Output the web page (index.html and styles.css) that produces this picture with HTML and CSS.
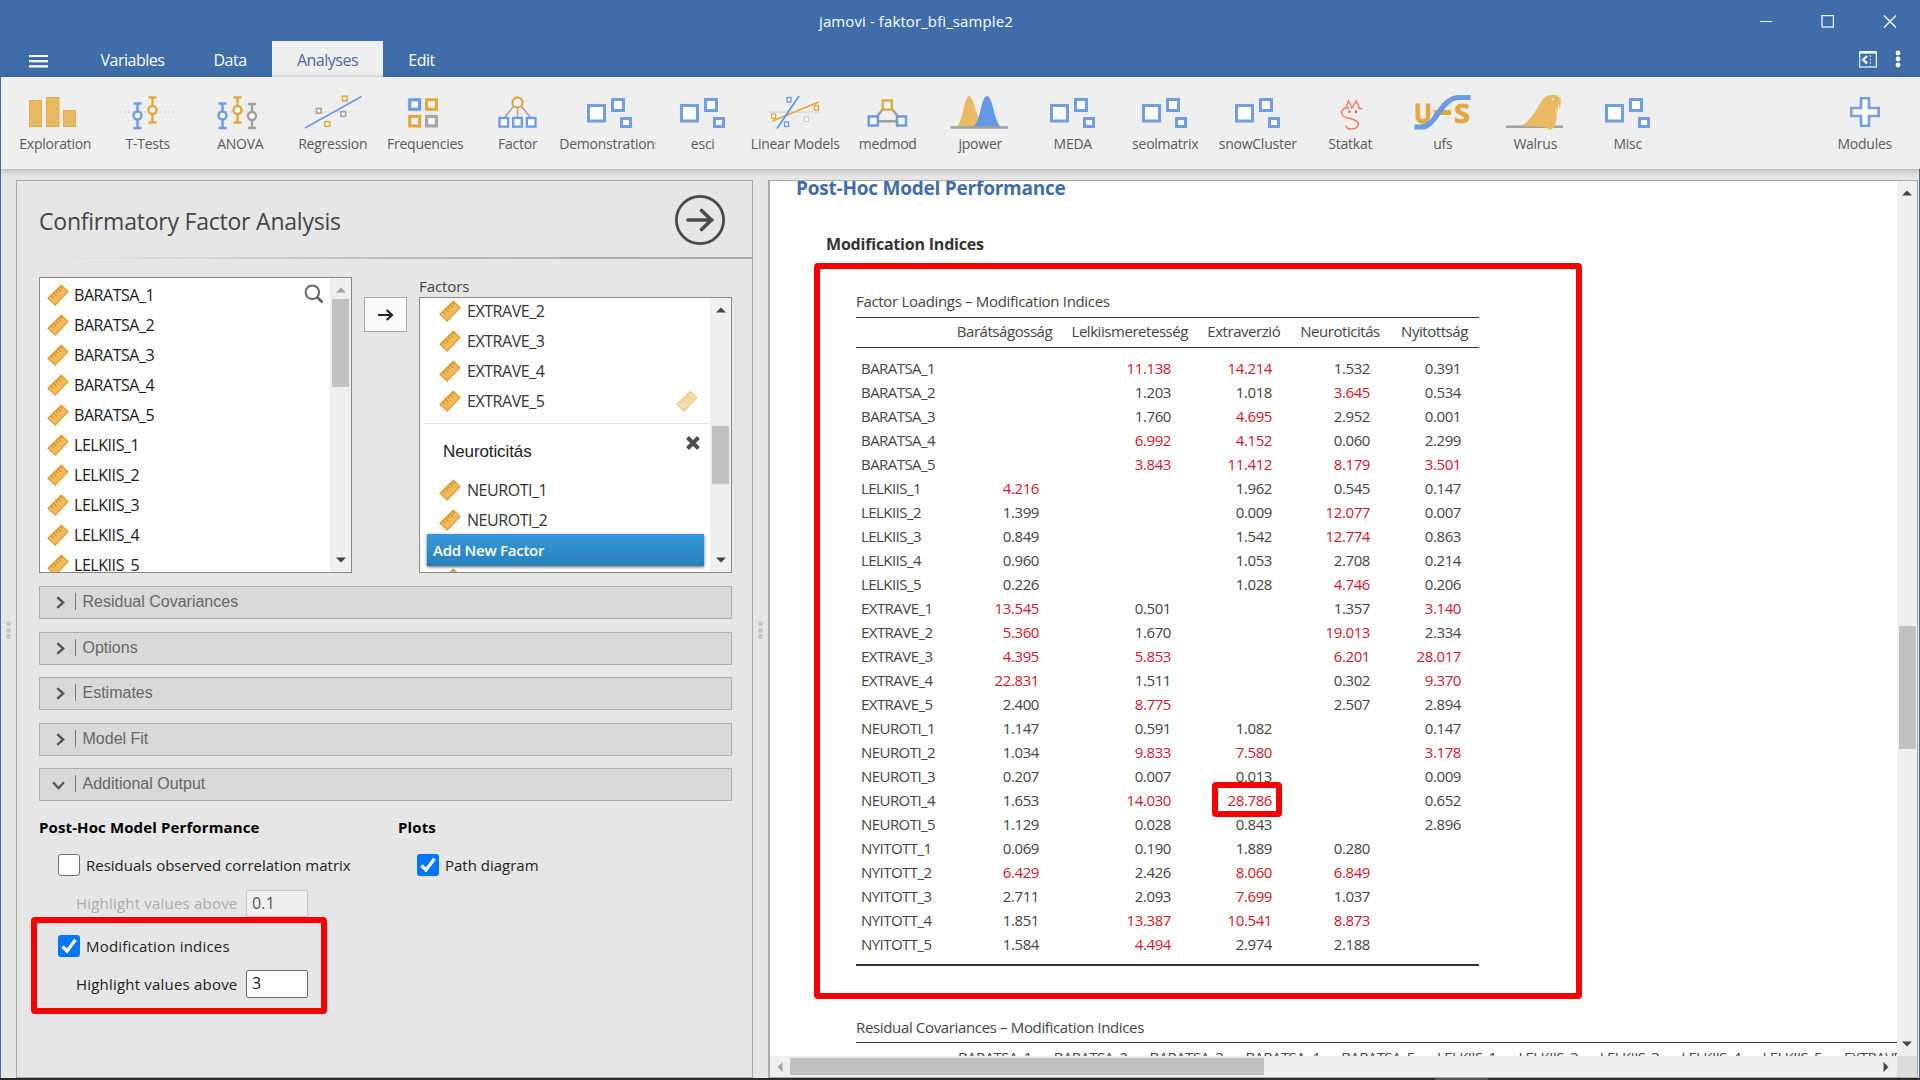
FILE: index.html
```html
<!DOCTYPE html>
<html lang="en">
<head>
<meta charset="utf-8">
<title>jamovi - faktor_bfi_sample2</title>
<link rel="stylesheet" href="styles.css">
</head>
<body>
<svg class="defs" aria-hidden="true">
  <symbol id="ruler" viewBox="0 0 22 22">
    <path d="M1 14.2 14.4 1.2 21 7.6 8.2 21Z" fill="#f2b95a" stroke="#dd9f35" stroke-width="1.3" stroke-linejoin="round"/>
    <path d="M4 11.6l2 2M6.4 9.2l3 3M8.8 6.8l2 2M11.2 4.6l3 3M13.4 2.6l2 2" stroke="#c98a22" stroke-width="1.1" fill="none"/>
  </symbol>
  <symbol id="squares" viewBox="0 0 60 36">
    <g fill="#fff" stroke="#739de3" stroke-width="3">
      <rect x="8.5" y="11.500" width="16" height="15.500"/>
      <rect x="32.500" y="5.500" width="11" height="11"/>
      <rect x="41.500" y="24.500" width="9" height="8"/>
    </g>
  </symbol>
  <symbol id="up" viewBox="0 0 10 6"><path d="M0 5.5 5 0.5 10 5.5Z" fill="currentColor"/></symbol>
  <symbol id="down" viewBox="0 0 10 6"><path d="M0 .5 5 5.5 10 .5Z" fill="currentColor"/></symbol>
  <symbol id="chev" viewBox="0 0 12 12"><path d="M3 1 8.5 6 3 11" fill="none" stroke="#555" stroke-width="2.2"/></symbol>
  <symbol id="arrow" viewBox="0 0 16 12"><path d="M0 6H14M8.7 1 14 6 8.7 11" fill="none" stroke="currentColor" stroke-width="2.2"/></symbol>
  <symbol id="check" viewBox="0 0 22 22"><path d="M4.5 11.5 9 16 17.5 4.8" fill="none" stroke="#fff" stroke-width="3.2"/></symbol>
</svg>

<div class="app">
  <header class="titlebar">
    <div class="window-row">
      <span class="window-title">jamovi - faktor_bfi_sample2</span>
      <svg class="window-controls" width="138" height="14" viewBox="0 0 138 14" fill="none" stroke="#fff" stroke-width="1.2">
        <path d="M1 7.5H13M125 1.5 137 13.5M137 1.5 125 13.5"/><rect x="63" y="1.6" width="11.4" height="11.4"/>
      </svg>
    </div>
    <nav class="tab-row">
      <svg class="burger" width="19" height="14" viewBox="0 0 19 14" stroke="#fff" stroke-width="2.2"><path d="M0 2H19M0 7.2H19M0 12.4H19"/></svg>
      <span class="tab tab-variables">Variables</span>
      <span class="tab tab-data">Data</span>
      <span class="tab tab-active">Analyses</span>
      <span class="tab tab-edit">Edit</span>
      <svg class="view-toggle" width="18" height="17" viewBox="0 0 18 17" fill="none" stroke="#dfe9f6"><rect x=".7" y="1" width="16.6" height="15" stroke-width="1.3"/><path d="M0 1.4H18" stroke="#fff" stroke-width="2.4"/><path d="M8 5 4 8.7 8 12.4" stroke="#fff" stroke-width="2.2"/><path d="M11.3 4V16" stroke-dasharray="2 1.5"/></svg>
      <svg class="more" width="6" height="18" viewBox="0 0 6 18" fill="#fff"><circle cx="3" cy="3" r="2.4"/><circle cx="3" cy="9" r="2.4"/><circle cx="3" cy="15" r="2.4"/></svg>
    </nav>
  </header>

  <div class="ribbon">
    <div class="module"><svg class="module-icon" viewBox="0 0 60 36"><g fill="#eaba62" stroke="#dfae50"><rect x="4.5" y="6.5" width="12" height="26"/><rect x="21.5" y="3.5" width="12.5" height="29"/><rect x="38.5" y="16.5" width="12" height="16"/></g></svg><span class="module-name">Exploration</span></div>
    <div class="module"><svg class="module-icon" viewBox="0 0 60 36"><path d="M2 18H58" stroke="#bbb" stroke-dasharray="1.5 2.5"/><g fill="#fff" stroke-width="2.4"><path stroke="#6c9be6" d="M19.5 9V34M15.5 9.5H23.5M15.5 34H23.5"/><circle stroke="#6c9be6" cx="19.5" cy="21.5" r="4"/><path stroke="#e3a83c" d="M34.5 3V29M30.5 3.5H38.5M30.5 28.5H38.5"/><circle stroke="#e3a83c" cx="34.5" cy="16" r="4"/></g></svg><span class="module-name">T-Tests</span></div>
    <div class="module"><svg class="module-icon" viewBox="0 0 60 36"><path d="M0 18H58" stroke="#bbb" stroke-dasharray="1.5 2.5"/><g fill="#fff" stroke-width="2.4"><path stroke="#6c9be6" d="M12.5 9V34M8.5 9.5H16.5M8.5 34H16.5"/><circle stroke="#6c9be6" cx="12.5" cy="21.5" r="4"/><path stroke="#e3a83c" d="M27.5 3V29M23.5 3.5H31.5M23.5 28.5H31.5"/><circle stroke="#e3a83c" cx="27.5" cy="16" r="4"/><path stroke="#a0a0a0" d="M42 9V34M38 10H46M38 34H46"/><circle stroke="#a0a0a0" cx="42" cy="22" r="4"/></g></svg><span class="module-name">ANOVA</span></div>
    <div class="module"><svg class="module-icon" viewBox="0 0 60 36"><path d="M2 18H59" stroke="#bbb" stroke-dasharray="1.5 2.5"/><path d="M2 34 58.5 2.5" stroke="#6c9be6" stroke-width="2"/><g fill="#fff" stroke-width="1.6"><rect x="39.5" y="2.2" width="4.6" height="4.6" stroke="#e3a83c"/><rect x="13.5" y="14.5" width="4.6" height="4.6" stroke="#a0a0a0"/><rect x="38" y="17.7" width="4.6" height="4.6" stroke="#a0a0a0"/><rect x="22" y="27.7" width="4.6" height="4.6" stroke="#e3a83c"/></g></svg><span class="module-name">Regression</span></div>
    <div class="module"><svg class="module-icon" viewBox="0 0 60 36"><g fill="#fff" stroke-width="3.2"><rect x="14.8" y="5.8" width="9.8" height="9.4" stroke="#6c9be6"/><rect x="31.6" y="5.8" width="9.8" height="9.4" stroke="#e3a83c"/><rect x="14.8" y="22.5" width="9.8" height="9.4" stroke="#e3a83c"/><rect x="31.6" y="22.5" width="9.8" height="9.4" stroke="#a8a8a8"/></g></svg><span class="module-name">Frequencies</span></div>
    <div class="module"><svg class="module-icon" viewBox="0 0 60 36"><path d="M26 12 16 24M29.5 14V24M33 12 43 24" stroke="#a0a0a0" stroke-width="1.5"/><g fill="#fff" stroke="#6c9be6" stroke-width="2.3"><circle cx="29.5" cy="8.5" r="5" stroke="#e3a83c"/><rect x="11.5" y="24" width="8.6" height="8.6"/><rect x="25.2" y="24" width="8.6" height="8.6"/><rect x="38.9" y="24" width="8.6" height="8.6"/></g></svg><span class="module-name">Factor</span></div>
    <div class="module"><svg class="module-icon"><use href="#squares"/></svg><span class="module-name module-name-clipped">Demonstrations</span></div>
    <div class="module"><svg class="module-icon"><use href="#squares"/></svg><span class="module-name">esci</span></div>
    <div class="module"><svg class="module-icon" viewBox="0 0 60 36"><path d="M4 18H54" stroke="#d8d8d8" stroke-width="1.6"/><path d="M7.5 27 54 8" stroke="#e3a83c" stroke-width="1.7"/><path d="M12 34.5 34 2" stroke="#5b94e8" stroke-width="1.7"/><g fill="#fff" stroke-width="1.3"><rect x="22" y="3.5" width="4" height="4.5" stroke="#5b94e8"/><rect x="49.5" y="11.5" width="4" height="4.500" stroke="#e3a83c"/><rect x="6.5" y="20" width="4" height="4.5" stroke="#e3a83c"/><rect x="19.5" y="28" width="4" height="4.5" stroke="#5b94e8"/><rect x="39.5" y="23" width="4" height="4.5" stroke="#ccc"/></g></svg><span class="module-name">Linear Models</span></div>
    <div class="module"><svg class="module-icon" viewBox="0 0 60 36"><path d="M25 15 17 25M34 15 42 25M20 27.3H40" stroke="#a0a0a0" stroke-width="2.5"/><g fill="#fff" stroke="#6c9be6" stroke-width="2.5"><rect x="24.8" y="6.5" width="9" height="9" stroke="#e3a83c"/><rect x="10.8" y="22.5" width="9" height="9"/><rect x="39" y="22.5" width="9" height="9"/></g></svg><span class="module-name">medmod</span></div>
    <div class="module"><svg class="module-icon" viewBox="0 0 60 36"><path d="M6 33C13 30 14 2 19 2S27 28 34 33Z" fill="#eaba62"/><path d="M22.500 33C30.500 30 31 2 37 2S44.500 30 51.500 33Z" fill="#6598e6"/><path d="M.5 33.5H58" stroke="#a0a0a0" stroke-width="2.6"/></svg><span class="module-name">jpower</span></div>
    <div class="module"><svg class="module-icon"><use href="#squares"/></svg><span class="module-name">MEDA</span></div>
    <div class="module"><svg class="module-icon"><use href="#squares"/></svg><span class="module-name">seolmatrix</span></div>
    <div class="module"><svg class="module-icon"><use href="#squares"/></svg><span class="module-name">snowCluster</span></div>
    <div class="module"><svg class="module-icon" viewBox="0 0 60 36"><g fill="none" stroke="#f08060" stroke-width="1.5"><path d="M25.5 15 28.5 7 31.8 14 36.3 7 39.5 14.8 42.5 14.2"/><path d="M29.5 14.2C22 13 18 20 25.5 23.2 30 25 37 25 38.5 29.5 38.5 36 27 37 25.5 31.5"/></g><circle cx="29.4" cy="17.7" r="1.2" fill="#e04848"/><circle cx="36" cy="17.7" r="1.2" fill="#e04848"/></svg><span class="module-name">Statkat</span></div>
    <div class="module"><svg class="module-icon" viewBox="0 0 60 36"><text class="ufs-letter" x="1" y="28.500" textLength="18" lengthAdjust="spacingAndGlyphs">U</text><path d="M21 18.5H38" stroke="#e3a83c" stroke-width="5"/><text class="ufs-letter" x="41" y="28.500" textLength="16" lengthAdjust="spacingAndGlyphs">S</text><path d="M1.500 33H8C24 33 27 3.500 46 3.500H57.500" fill="none" stroke="#6c9be6" stroke-width="5.2"/></svg><span class="module-name">ufs</span></div>
    <div class="module"><svg class="module-icon" viewBox="0 0 60 36"><path d="M1 32.7H58" stroke="#a0a0a0" stroke-width="2.5"/><path d="M15 32C30 26 35 4 42 2 49 -.5 55 1 56 7L55 15 53 9 52.5 20 50.5 11C51 20 53 25 50 31 49 36 43 37 41 33Z" fill="#eaba62"/><circle cx="48" cy="5.500" r="1" fill="#fff"/></svg><span class="module-name">Walrus</span></div>
    <div class="module"><svg class="module-icon"><use href="#squares"/></svg><span class="module-name">Misc</span></div>
    <div class="module module-add"><svg class="module-icon" viewBox="0 0 60 36"><path d="M26 4.300H34V14H43.700V22H34V31.700H26V22H16.300V14H26Z" fill="#fff" stroke="#739de3" stroke-width="2.6"/></svg><span class="module-name">Modules</span></div>
  </div>

  <main class="workspace">
    <div class="grip"><i></i><i></i><i></i></div>
    <section class="options">
      <div class="options-head">
        <h1>Confirmatory Factor Analysis</h1>
        <svg class="go" width="50" height="50" viewBox="0 0 50 50" fill="none" stroke="#4a4a4a"><circle cx="25" cy="25" r="23.6" stroke-width="2.8"/><path d="M13 25H37M26.5 15.5 36.5 25 26.5 34.5" stroke-width="3.6" stroke-linecap="round" stroke-linejoin="round"/></svg>
      </div>
      <div class="rule"></div>
      <div class="options-body">
        <div class="pickers">
          <div class="listbox supplier">
            <div class="items">
              <div class="item"><svg><use href="#ruler"/></svg>BARATSA_1</div>
              <div class="item"><svg><use href="#ruler"/></svg>BARATSA_2</div>
              <div class="item"><svg><use href="#ruler"/></svg>BARATSA_3</div>
              <div class="item"><svg><use href="#ruler"/></svg>BARATSA_4</div>
              <div class="item"><svg><use href="#ruler"/></svg>BARATSA_5</div>
              <div class="item"><svg><use href="#ruler"/></svg>LELKIIS_1</div>
              <div class="item"><svg><use href="#ruler"/></svg>LELKIIS_2</div>
              <div class="item"><svg><use href="#ruler"/></svg>LELKIIS_3</div>
              <div class="item"><svg><use href="#ruler"/></svg>LELKIIS_4</div>
              <div class="item"><svg><use href="#ruler"/></svg>LELKIIS_5</div>
            </div>
            <svg class="search" width="20" height="20" viewBox="0 0 20 20" fill="none" stroke="#666" stroke-width="2"><circle cx="8.3" cy="8.3" r="6.8"/><path d="M13 13 18.5 18.5" stroke-width="2.6"/></svg>
            <div class="vscroll"><svg class="tip faded"><use href="#up"/></svg><div class="thumb thumb-supplier"></div><svg class="tip tip-end"><use href="#down"/></svg></div>
          </div>
          <div class="move"><svg width="16" height="12"><use href="#arrow"/></svg></div>
          <div class="target">
            <div class="target-label">Factors</div>
            <div class="listbox factors">
              <div class="items">
                <div class="item"><svg><use href="#ruler"/></svg>EXTRAVE_2</div>
                <div class="item"><svg><use href="#ruler"/></svg>EXTRAVE_3</div>
                <div class="item"><svg><use href="#ruler"/></svg>EXTRAVE_4</div>
                <div class="item"><svg><use href="#ruler"/></svg>EXTRAVE_5<svg class="ghost"><use href="#ruler"/></svg></div>
                <div class="group-title"><span>Neuroticitás</span><svg width="14" height="14" viewBox="0 0 14 14" stroke="#4d4d4d" stroke-width="4"><path d="M1.5 1.5 12.5 12.5M12.5 1.5 1.5 12.5"/></svg></div>
                <div class="item"><svg><use href="#ruler"/></svg>NEUROTI_1</div>
                <div class="item"><svg><use href="#ruler"/></svg>NEUROTI_2</div>
                <div class="item item-under"><svg><use href="#ruler"/></svg></div>
              </div>
              <div class="add-factor">Add New Factor</div>
              <div class="vscroll"><svg class="tip"><use href="#up"/></svg><div class="thumb thumb-factors"></div><svg class="tip tip-end"><use href="#down"/></svg></div>
            </div>
          </div>
        </div>
        <div class="sections">
          <div class="section"><svg><use href="#chev"/></svg><span>Residual Covariances</span></div>
          <div class="section"><svg><use href="#chev"/></svg><span>Options</span></div>
          <div class="section"><svg><use href="#chev"/></svg><span>Estimates</span></div>
          <div class="section"><svg><use href="#chev"/></svg><span>Model Fit</span></div>
          <div class="section section-open"><svg><use href="#chev"/></svg><span>Additional Output</span></div>
        </div>
        <div class="extra">
          <div class="extra-col">
            <h2>Post-Hoc Model Performance</h2>
            <div class="check-row"><span class="box"></span>Residuals observed correlation matrix</div>
            <div class="value-row value-off"><span>Highlight values above</span><span class="field">0.1</span></div>
            <div class="check-row check-row-second"><span class="box box-on"><svg><use href="#check"/></svg></span>Modification indices</div>
            <div class="value-row"><span>Highlight values above</span><span class="field">3</span></div>
            <div class="mark mark-option"></div>
          </div>
          <div class="extra-col">
            <h2>Plots</h2>
            <div class="check-row"><span class="box box-on"><svg><use href="#check"/></svg></span>Path diagram</div>
          </div>
        </div>
      </div>
    </section>
    <div class="grip"><i></i><i></i><i></i></div>
    <section class="results">
      <div class="results-main">
        <div class="page">
          <h2 class="page-title">Post-Hoc Model Performance</h2>
          <h3 class="page-subtitle">Modification Indices</h3>
          <div class="table-block">
            <table class="loadings">
              <caption>Factor Loadings – Modification Indices</caption>
              <colgroup><col class="c0"><col class="c1"><col class="c2"><col class="c3"><col class="c4"><col class="c5"></colgroup>
              <thead><tr><th></th><th>Barátságosság</th><th>Lelkiismeretesség</th><th>Extraverzió</th><th>Neuroticitás</th><th>Nyitottság</th></tr></thead>
              <tbody>
                <tr><td>BARATSA_1</td><td></td><td class="hi">11.138</td><td class="hi">14.214</td><td>1.532</td><td>0.391</td></tr>
                <tr><td>BARATSA_2</td><td></td><td>1.203</td><td>1.018</td><td class="hi">3.645</td><td>0.534</td></tr>
                <tr><td>BARATSA_3</td><td></td><td>1.760</td><td class="hi">4.695</td><td>2.952</td><td>0.001</td></tr>
                <tr><td>BARATSA_4</td><td></td><td class="hi">6.992</td><td class="hi">4.152</td><td>0.060</td><td>2.299</td></tr>
                <tr><td>BARATSA_5</td><td></td><td class="hi">3.843</td><td class="hi">11.412</td><td class="hi">8.179</td><td class="hi">3.501</td></tr>
                <tr><td>LELKIIS_1</td><td class="hi">4.216</td><td></td><td>1.962</td><td>0.545</td><td>0.147</td></tr>
                <tr><td>LELKIIS_2</td><td>1.399</td><td></td><td>0.009</td><td class="hi">12.077</td><td>0.007</td></tr>
                <tr><td>LELKIIS_3</td><td>0.849</td><td></td><td>1.542</td><td class="hi">12.774</td><td>0.863</td></tr>
                <tr><td>LELKIIS_4</td><td>0.960</td><td></td><td>1.053</td><td>2.708</td><td>0.214</td></tr>
                <tr><td>LELKIIS_5</td><td>0.226</td><td></td><td>1.028</td><td class="hi">4.746</td><td>0.206</td></tr>
                <tr><td>EXTRAVE_1</td><td class="hi">13.545</td><td>0.501</td><td></td><td>1.357</td><td class="hi">3.140</td></tr>
                <tr><td>EXTRAVE_2</td><td class="hi">5.360</td><td>1.670</td><td></td><td class="hi">19.013</td><td>2.334</td></tr>
                <tr><td>EXTRAVE_3</td><td class="hi">4.395</td><td class="hi">5.853</td><td></td><td class="hi">6.201</td><td class="hi">28.017</td></tr>
                <tr><td>EXTRAVE_4</td><td class="hi">22.831</td><td>1.511</td><td></td><td>0.302</td><td class="hi">9.370</td></tr>
                <tr><td>EXTRAVE_5</td><td>2.400</td><td class="hi">8.775</td><td></td><td>2.507</td><td>2.894</td></tr>
                <tr><td>NEUROTI_1</td><td>1.147</td><td>0.591</td><td>1.082</td><td></td><td>0.147</td></tr>
                <tr><td>NEUROTI_2</td><td>1.034</td><td class="hi">9.833</td><td class="hi">7.580</td><td></td><td class="hi">3.178</td></tr>
                <tr><td>NEUROTI_3</td><td>0.207</td><td>0.007</td><td>0.013</td><td></td><td>0.009</td></tr>
                <tr><td>NEUROTI_4</td><td>1.653</td><td class="hi">14.030</td><td class="hi marked">28.786<div class="mark mark-cell"></div></td><td></td><td>0.652</td></tr>
                <tr><td>NEUROTI_5</td><td>1.129</td><td>0.028</td><td>0.843</td><td></td><td>2.896</td></tr>
                <tr><td>NYITOTT_1</td><td>0.069</td><td>0.190</td><td>1.889</td><td>0.280</td><td></td></tr>
                <tr><td>NYITOTT_2</td><td class="hi">6.429</td><td>2.426</td><td class="hi">8.060</td><td class="hi">6.849</td><td></td></tr>
                <tr><td>NYITOTT_3</td><td>2.711</td><td>2.093</td><td class="hi">7.699</td><td>1.037</td><td></td></tr>
                <tr><td>NYITOTT_4</td><td>1.851</td><td class="hi">13.387</td><td class="hi">10.541</td><td class="hi">8.873</td><td></td></tr>
                <tr><td>NYITOTT_5</td><td>1.584</td><td class="hi">4.494</td><td>2.974</td><td>2.188</td><td></td></tr>
              </tbody>
            </table>
            <div class="mark mark-table"></div>
          </div>
          <div class="residual">
            <div class="residual-title">Residual Covariances – Modification Indices</div>
            <div class="residual-head"><span>BARATSA_1</span><span>BARATSA_2</span><span>BARATSA_3</span><span>BARATSA_4</span><span>BARATSA_5</span><span class="narrow">LELKIIS_1</span><span class="narrow">LELKIIS_2</span><span class="narrow">LELKIIS_3</span><span class="narrow">LELKIIS_4</span><span class="narrow">LELKIIS_5</span><span>EXTRAVE_1</span></div>
          </div>
        </div>
        <div class="vscroll vscroll-page"><svg class="tip"><use href="#up"/></svg><div class="thumb thumb-page"></div><svg class="tip tip-end"><use href="#down"/></svg></div>
      </div>
      <div class="hscroll"><svg width="6" height="10" viewBox="0 0 6 10"><path d="M5.5 0 .5 5 5.5 10Z" fill="#a3a3a3"/></svg><div class="hthumb"></div><svg class="hright" width="6" height="10" viewBox="0 0 6 10"><path d="M.5 0 5.5 5 .5 10Z" fill="#444"/></svg><div class="corner"></div></div>
    </section>
  </main>
  <div class="desk"><div class="desk-part"></div></div>
</div>
</body>
</html>
```
FILE: styles.css
```css
* { box-sizing: border-box; }
body { margin: 0; width: 1920px; height: 1080px; overflow: hidden; font-family: "Open Sans", "Noto Sans", sans-serif; font-size: 15px; color: #444; background: #e6e6e6; }
h1, h2, h3 { margin: 0; font-weight: 400; }
svg { display: block; flex: none; }
.defs { position: absolute; width: 0; height: 0; }
.app { display: flex; flex-direction: column; height: 1080px; white-space: nowrap; }

/* title bar and tabs */
.titlebar { height: 77px; background: #3e6da9; color: #fff; }
.window-row { height: 41px; display: flex; align-items: center; padding-right: 23px; }
.window-title { flex: 1; padding-left: 819px; font-size: 15px; letter-spacing: .1px; line-height: 41px; padding-top: 1px; }
.tab-row { height: 36px; display: flex; align-items: center; padding: 0 19px 0 29px; }
.tab { height: 36px; line-height: 39px; font-size: 16px; letter-spacing: -.5px; text-align: center; }
.burger { margin-right: 29px; margin-top: 3px; }
.tab-variables { width: 111px; }
.tab-data { width: 84px; }
.tab-active { width: 111px; background: #efefef; color: #4a69a5; }
.tab-edit { width: 77px; margin-right: auto; }
.view-toggle { margin-right: 18px; }

/* ribbon */
.ribbon { height: 92px; display: flex; padding: 17px 9px 0 8px; background: #efefef; border-left: 1px solid #3e6da9; position: relative; box-shadow: 0 1px 6px rgba(0,0,0,.3); }
.module { width: 92.5px; display: flex; flex-direction: column; align-items: center; gap: 4px; }
.module-add { margin-left: auto; }
.module-icon { width: 60px; height: 36px; }
.module-name { line-height: 20px; font-size: 14px; letter-spacing: -.25px; color: #5a5a5a; }
.module-name-clipped { max-width: 97px; overflow: hidden; margin-right: 4px; margin-left: -1px; }
.ufs-letter { font: bold 27px "Open Sans", sans-serif; fill: #e3a83c; stroke: #e3a83c; stroke-width: .8px; }

/* workspace */
.workspace { flex: 1; min-height: 0; display: flex; padding: 11px 1px 0 0; border-left: 1px solid #3e6da9; border-right: 1px solid #3e6da9; }
.grip { width: 15px; display: flex; flex-direction: column; align-items: center; gap: 1.5px; padding-top: 441px; }
.grip i { width: 5px; height: 5px; border-radius: 50%; background: #c6c6c6; }
.options { width: 737px; border: 1px solid #aaa; background: #e6e6e6; }
.options-head { height: 76px; display: flex; justify-content: space-between; padding: 14px 27px 0 22px; }
.options-head h1 { font-size: 23px; line-height: 50px; margin-top: 1px; letter-spacing: -.22px; color: #444; }
.rule { height: 2px; margin-left: 24px; background: linear-gradient(90deg, #e6e6e6, #b5b5b5 60%, #aaa); }
.options-body { padding: 18px 20px 0 22px; }
.pickers { display: flex; }
.listbox { position: relative; display: flex; background: #fff; border: 1px solid #888; overflow: hidden; width: 313px; }
.supplier { height: 296px; }
.factors { height: 276px; }
.items { flex: 1; padding: 2px 0 0 7px; color: #1a1a1a; }
.item { height: 30px; display: flex; align-items: center; font-size: 16px; letter-spacing: -.45px; gap: 5px; }
.item svg { width: 22px; height: 22px; }
.factors .item { gap: 6px; }
.factors .items { padding: 0 0 0 19px; color: #333; margin-top: -2px; }
.factors .item .ghost { opacity: .5; margin-left: auto; margin-right: 12px; }
.factors .item-under { margin-top: 29px; }
.group-title { height: 53px; margin-left: -15px; border-top: 1px solid #e4e4e4; margin-top: 7px; margin-bottom: -1px; padding: 12px 10px 0 19px; display: flex; justify-content: space-between; font: 17px/32px "Liberation Sans", Arial, sans-serif; letter-spacing: -.1px; color: #222; }
.search { position: absolute; left: 264px; top: 6px; }
.vscroll { width: 21px; background: #f0f0f0; display: flex; flex-direction: column; align-items: center; color: #444; }
.tip { width: 10px; height: 6px; margin-top: 9px; }
.tip-end { margin: auto 0 9px; }
.faded { color: #a3a3a3; }
.thumb { width: 17px; background: #c1c1c1; }
.thumb-supplier { height: 88px; margin-top: 6px; }
.thumb-factors { height: 58px; margin-top: 113px; }
.move { width: 43px; height: 35px; margin: 20px 12px 0; background: #fafafa; border: 1px solid #aaa; display: flex; align-items: center; justify-content: center; color: #222; }
.target-label { height: 20px; line-height: 18px; font-size: 15px; letter-spacing: -.1px; }
.add-factor { position: absolute; left: 7px; top: 236px; width: 277px; height: 32px; line-height: 32px; padding-left: 6px; color: #fff; font-size: 15px; font-weight: 600; letter-spacing: -.25px; background: linear-gradient(#3498db, #2980b9); box-shadow: 0 1px 3px rgba(0,0,0,.6); }

.sections { display: flex; flex-direction: column; gap: 12.5px; margin-top: 13px; }
.section { height: 33px; display: flex; align-items: center; background: #d9d9d9; border: 1px solid #adadad; padding-left: 14px; font: 16px "Liberation Sans", Arial, sans-serif; color: #666; }
.section svg { width: 13px; height: 13px; margin-right: 8px; }
.section span { border-left: 1px solid #777; padding-left: 6.5px; line-height: 17px; margin-bottom: 2px; }
.section-open svg { transform: translate(-2px, 1px) rotate(90deg); }

.extra { display: flex; margin-top: 15px; }
.extra-col { position: relative; flex: none; width: 359px; color: #222; }
.extra-col + .extra-col { width: 300px; }
.extra-col h2 { font-size: 15px; line-height: 22px; font-weight: 700; letter-spacing: .12px; color: #000; }
.check-row { display: flex; align-items: center; height: 22px; margin: 16px 0 0 19px; gap: 6px; font-size: 15px; letter-spacing: 0; }
.box { width: 22px; height: 22px; border: 1px solid #707070; border-radius: 3px; background: #fff; }
.box-on { border: 0; background: #0075ff; }
.box svg { width: 22px; height: 22px; }
.value-row { display: flex; align-items: center; height: 28px; margin: 13px 0 0 37px; font-size: 15px; letter-spacing: .2px; }
.value-row > span:first-child { width: 170px; }
.field { width: 62px; height: 28px; border: 1px solid #6a6a6a; border-radius: 2px; background: #fff; line-height: 25px; padding-left: 5px; font-size: 16px; }
.value-off { color: #aaa; }
.value-off .field { height: 27px; line-height: 24px; background: #f0f0f0; border-color: #c6c6c6; color: #555; }
.check-row-second { margin-top: 18px; letter-spacing: .2px; }

.mark { position: absolute; border: 6px solid #f80000; border-radius: 4px; }
.mark-option { left: -8px; top: 101px; width: 296px; height: 97px; }
.mark-table { left: 44px; top: 6px; width: 768px; height: 736px; }
.mark-cell { right: 8px; top: -6px; width: 70px; height: 35px; }

/* results */
.results { flex: 1; min-width: 0; display: flex; flex-direction: column; border: 1px solid #aaa; border-left-width: 2px; }
.results-main { flex: 1; min-height: 0; display: flex; background: #fff; }
.page { flex: 1; min-width: 0; overflow: hidden; }
.page-title { margin: -6px 0 0 26px; font-size: 19px; line-height: 26px; font-weight: 700; letter-spacing: -.22px; color: #3e6da9; }
.page-subtitle { margin: 30px 0 0 56px; font-size: 16px; line-height: 26px; font-weight: 700; letter-spacing: -.2px; color: #333; }
.table-block { position: relative; padding: 33px 0 0 86px; }
.loadings { border-collapse: separate; border-spacing: 0; table-layout: fixed; width: 623px; border-bottom: 2px solid #333; padding-bottom: 8px; font-size: 15px; }
.loadings caption { text-align: left; height: 27px; line-height: 22px; letter-spacing: -.32px; }
.c0 { width: 91px; } .c1 { width: 115px; } .c2 { width: 135.5px; } .c3 { width: 92.5px; } .c4 { width: 100px; } .c5 { width: 89px; }
.loadings th { height: 31px; padding: 0 0 2px; border: 1px solid #333; border-width: 1px 0; font-weight: 400; letter-spacing: -.45px; line-height: 27px; }
.loadings td { height: 24px; padding: 0 18px 0 0; line-height: 24px; text-align: right; letter-spacing: -.4px; }
.loadings tbody tr:first-child td { height: 32px; padding-top: 8px; }
.loadings td:first-child { text-align: left; padding-left: 5px; padding-right: 0; letter-spacing: -.55px; }
.loadings td:nth-child(2) { padding-right: 23px; }
.loadings td:nth-child(3) { padding-right: 26.5px; }
.loadings td:nth-child(5) { padding-right: 20px; }
.loadings .hi { color: #d0162c; }
.marked { position: relative; }
.residual { margin: 50px 0 0 86px; letter-spacing: -.35px; }
.residual-title { height: 27px; line-height: 22px; border-bottom: 1px solid #333; }
.residual-head { display: flex; padding-left: 102px; line-height: 28px; letter-spacing: -.6px; }
.residual-head span { width: 95.8px; flex: none; }
.residual-head .narrow { width: 81.4px; }
.vscroll-page { width: 20px; }
.thumb-page { margin-top: 430px; height: 123px; }
.hscroll { height: 21px; display: flex; align-items: center; background: #f0f0f0; padding-left: 7px; }
.hthumb { width: 474px; height: 17px; margin-left: 7px; background: #c1c1c1; }
.hright { margin-left: auto; margin-right: 8px; }
.corner { width: 20px; height: 21px; background: #dcdcdc; }
.desk { height: 2px; background: #2b2b2b; }
.desk-part { width: 53px; height: 2px; margin-left: 1435px; background: #555; }
```
